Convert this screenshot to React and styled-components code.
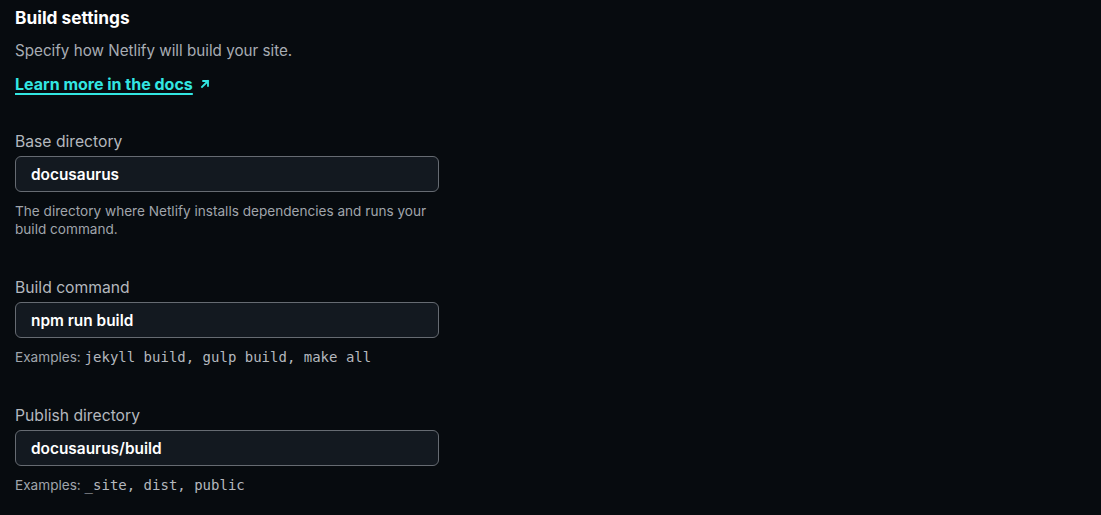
import React from 'react';
import styled, { createGlobalStyle } from 'styled-components';

const GlobalStyle = createGlobalStyle`
  html, body {
    margin: 0;
    background: #070b0f;
  }
  body {
    font-family: Inter, "Liberation Sans", sans-serif;
    -webkit-font-smoothing: antialiased;
  }
`;

const fields = [
  {
    label: 'Base directory',
    value: 'docusaurus',
    help: <>The directory where Netlify installs dependencies and runs your build command.</>,
  },
  {
    label: 'Build command',
    value: 'npm run build',
    help: <>Examples: <Code>jekyll build, gulp build, make all</Code></>,
  },
  {
    label: 'Publish directory',
    value: 'docusaurus/build',
    help: <>Examples: <Code>_site, dist, public</Code></>,
  },
];

function Code({ children }) {
  return <Mono>{children}</Mono>;
}

const App = () => (
  <>
    <GlobalStyle />
    <Page>
      <Title>Build settings</Title>
      <Lead>Specify how Netlify will build your site.</Lead>
      <DocsLink href="#">
        <span>Learn more in the docs</span>
        <Arrow viewBox="0 0 12 12">
          <path d="M3 9L9 3M4.2 3H9v4.8" fill="none" stroke="currentColor" strokeWidth="1.8" strokeLinecap="square" />
        </Arrow>
      </DocsLink>
      <Fields>
        {fields.map((f) => (
          <Field key={f.label}>
            <Label>{f.label}</Label>
            <Input defaultValue={f.value} />
            <Help>{f.help}</Help>
          </Field>
        ))}
      </Fields>
    </Page>
  </>
);

const Page = styled.div`
  padding: 6px 15px 0;
  display: flex;
  flex-direction: column;
  align-items: flex-start;
`;

const Title = styled.h2`
  margin: 0;
  font-size: 17.3px;
  line-height: 24px;
  font-weight: 700;
  color: #ffffff;
`;

const Lead = styled.p`
  margin: 10px 0 0;
  font-size: 15.2px;
  line-height: 22px;
  color: #a8adb4;
`;

const DocsLink = styled.a`
  margin-top: 11px;
  display: inline-flex;
  align-items: center;
  gap: 6px;
  font-size: 16px;
  line-height: 22px;
  font-weight: 700;
  color: #32e6e2;
  text-decoration: none;

  span {
    text-decoration: underline;
    text-underline-offset: 3px;
    text-decoration-thickness: 2px;
  }
`;

const Arrow = styled.svg`
  width: 12px;
  height: 12px;
`;

const Fields = styled.div`
  margin-top: 37px;
  display: flex;
  flex-direction: column;
  gap: 40px;
  width: 424px;
`;

const Field = styled.div`
  display: flex;
  flex-direction: column;
`;

const Label = styled.label`
  font-size: 15.7px;
  line-height: 20px;
  color: #b4b8be;
  margin-bottom: 4px;
`;

const Input = styled.input`
  box-sizing: border-box;
  width: 100%;
  height: 36px;
  padding: 0 15px;
  background: #131920;
  border: 1px solid #666b72;
  border-radius: 6px;
  color: #ffffff;
  font-family: inherit;
  font-size: 15.4px;
  font-weight: 600;
  outline: none;
`;

const Help = styled.p`
  margin: 10px 0 0;
  font-size: 13.6px;
  line-height: 18px;
  color: #a0a5ac;
`;

const Mono = styled.code`
  font-family: "DejaVu Sans Mono", "Liberation Mono", monospace;
  font-size: 14px;
  color: #b4b8be;
`;

export default App;
